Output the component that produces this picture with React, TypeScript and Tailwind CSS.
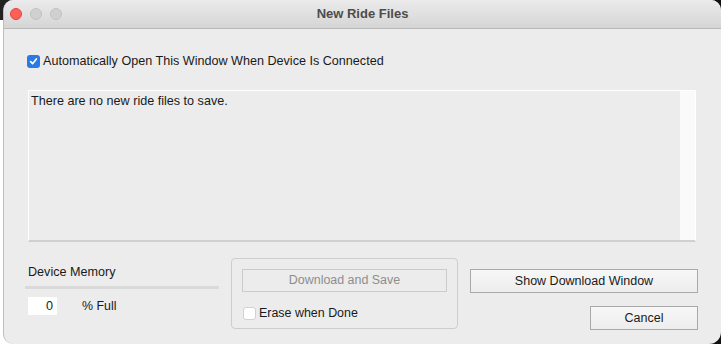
import React from "react";

export default function App() {
  const font = { fontFamily: '"Liberation Sans", Arial, sans-serif' };
  return (
    <div className="w-[721px] h-[344px] bg-white overflow-hidden relative" style={font}>
      <div className="absolute left-0 top-0 w-[40px] h-[20px] bg-[#222]" />
      <div className="absolute right-0 top-0 w-[30px] h-[20px] bg-[#111]" />
      <div className="absolute right-0 bottom-0 w-[30px] h-[30px] bg-[#111]" />
      <div className="ml-[3px] w-[718px] h-[344px] bg-[#ececec] rounded-t-[10px] rounded-bl-[10px] rounded-br-[12px] border-l border-[#bdbdbd] flex flex-col overflow-hidden relative">
        {/* title bar */}
        <div className="h-[29px] shrink-0 bg-gradient-to-b from-[#ebebeb] to-[#d5d5d5] border-b border-[#b9b9b9] flex items-center relative">
          <div className="flex gap-[8px] ml-[6px]">
            <div className="w-[12px] h-[12px] rounded-full bg-[#fe5f57] border border-[#e0443e]" />
            <div className="w-[12px] h-[12px] rounded-full bg-[#d0d0d0] border border-[#c2c2c2]" />
            <div className="w-[12px] h-[12px] rounded-full bg-[#d0d0d0] border border-[#c2c2c2]" />
          </div>
          <div className="absolute inset-0 flex items-center justify-center text-[13px] font-bold text-[#4c4c4c]">
            New Ride Files
          </div>
        </div>

        {/* checkbox row */}
        <div className="flex items-center mt-[25px] ml-[23px] h-[14px]">
          <div className="w-[13px] h-[13px] rounded-[3px] bg-[#2a7ae4] flex items-center justify-center">
            <svg width="9" height="9" viewBox="0 0 10 10">
              <path d="M1.8 5.2 L4 7.5 L8.2 2.2" fill="none" stroke="white" strokeWidth="1.8" strokeLinecap="round" strokeLinejoin="round" />
            </svg>
          </div>
          <span className="ml-[3px] text-[12.6px] text-[#1a1a1a] leading-none">
            Automatically Open This Window When Device Is Connected
          </span>
        </div>

        {/* text area */}
        <div className="mt-[22px] ml-[24px] w-[668px] h-[152px] border-t border-l border-r border-white border-b-2 border-b-[#d0d0d0] flex">
          <div className="flex-1 bg-[#ececec] pl-[2px] pt-[1px] text-[12.6px] text-[#1a1a1a]">
            There are no new ride files to save.
          </div>
          <div className="w-[15px] bg-[#fafafa]" />
        </div>

        {/* bottom area */}
        <div className="flex mt-[15px]">
          <div className="ml-[21px] w-[194px] flex flex-col">
            <div className="text-[12.6px] text-[#1a1a1a] ml-[3px] mt-[9px] leading-none">Device Memory</div>
            <div className="h-[3px] bg-[#dadada] mt-[7px]" />
            <div className="flex items-center mt-[8px]">
              <div className="ml-[3px] w-[29px] h-[18px] bg-white text-[12.6px] text-right pr-[4px] leading-[18px] text-[#1a1a1a]">0</div>
              <div className="ml-[25px] text-[12.4px] text-[#1a1a1a]">% Full</div>
            </div>
          </div>

          <div className="ml-[12px] mt-[1px] w-[227px] h-[71px] border border-[#cdcdcd] rounded-[4px] flex flex-col">
            <div className="mt-[10px] ml-[10px] w-[205px] h-[23px] border border-[#cbcbcb] bg-[#ececec] flex items-center justify-center text-[12.45px] text-[#8e8e8e]">
              Download and Save
            </div>
            <div className="flex items-center mt-[12px] ml-[11px]">
              <div className="w-[13px] h-[13px] rounded-[3px] bg-white border border-[#d2d2d2]" />
              <span className="ml-[3px] text-[12.45px] text-[#1a1a1a]">Erase when Done</span>
            </div>
          </div>

          <div className="ml-[12px] flex flex-col items-end w-[228px]">
            <div className="mt-[12px] w-[228px] h-[24px] border border-[#a9a9a9] bg-gradient-to-b from-[#f7f7f7] to-[#ededed] flex items-center justify-center text-[12.5px] text-[#1a1a1a]">
              Show Download Window
            </div>
            <div className="mt-[13px] w-[108px] h-[24px] border border-[#a9a9a9] bg-gradient-to-b from-[#f7f7f7] to-[#ededed] flex items-center justify-center text-[12.5px] text-[#1a1a1a]">
              Cancel
            </div>
          </div>
        </div>
      </div>
    </div>
  );
}
